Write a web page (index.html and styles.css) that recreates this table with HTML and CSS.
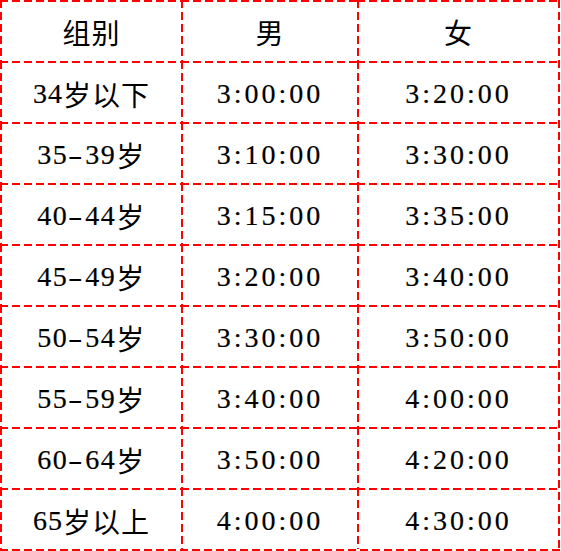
FILE: index.html
```html
<!DOCTYPE html>
<html lang="zh-CN">
<head>
<meta charset="utf-8">
<title>分组标准</title>
<link rel="stylesheet" href="styles.css">
</head>
<body>
<div class="table">
  <div class="cell head">组别</div><div class="cell head">男</div><div class="cell head">女</div>
  <div class="cell"><span class="d">34</span>岁以下</div><div class="cell num">3:00:00</div><div class="cell num">3:20:00</div>
  <div class="cell range"><span class="d">35</span><span class="dash">-</span><span class="d">39</span>岁</div><div class="cell num">3:10:00</div><div class="cell num">3:30:00</div>
  <div class="cell range"><span class="d">40</span><span class="dash">-</span><span class="d">44</span>岁</div><div class="cell num">3:15:00</div><div class="cell num">3:35:00</div>
  <div class="cell range"><span class="d">45</span><span class="dash">-</span><span class="d">49</span>岁</div><div class="cell num">3:20:00</div><div class="cell num">3:40:00</div>
  <div class="cell range"><span class="d">50</span><span class="dash">-</span><span class="d">54</span>岁</div><div class="cell num">3:30:00</div><div class="cell num">3:50:00</div>
  <div class="cell range"><span class="d">55</span><span class="dash">-</span><span class="d">59</span>岁</div><div class="cell num">3:40:00</div><div class="cell num">4:00:00</div>
  <div class="cell range"><span class="d">60</span><span class="dash">-</span><span class="d">64</span>岁</div><div class="cell num">3:50:00</div><div class="cell num">4:20:00</div>
  <div class="cell"><span class="d">65</span>岁以上</div><div class="cell num">4:00:00</div><div class="cell num">4:30:00</div>
</div>
</body>
</html>
```
FILE: styles.css
```css
html, body {
  margin: 0;
  padding: 0;
  background: #ffffff;
}

.table {
  display: grid;
  grid-template-columns: 181px 176px 201px;
  grid-auto-rows: 61px;
  width: 560px;
  padding: 0 2px 2px 0;
  box-sizing: border-box;
  background:
    repeating-linear-gradient(to bottom, #ff0000 0 8px, transparent 8px 12px) right top / 2px 100% no-repeat,
    repeating-linear-gradient(to right, #ff0000 0 8px, transparent 8px 12px) left bottom / 100% 2px no-repeat;
  font-family: "Liberation Serif", "Noto Sans CJK SC", serif;
  font-size: 28px;
  color: #000000;
}

.cell {
  display: flex;
  align-items: center;
  justify-content: center;
  padding: 4px 0 0 2px;
  letter-spacing: 1px;
  background:
    repeating-linear-gradient(to right, #ff0000 0 8px, transparent 8px 12px) left top / 100% 2px no-repeat,
    repeating-linear-gradient(to bottom, #ff0000 0 8px, transparent 8px 12px) left top / 2px 100% no-repeat;
}

.head {
  padding-top: 2px;
}

.d {
  -webkit-text-stroke: 0.2px #000;
}

.range {
  letter-spacing: 1.5px;
}

.dash {
  display: inline-block;
  transform: scaleX(1.6);
  margin: 0 3px;
}

.num {
  letter-spacing: 3px;
  -webkit-text-stroke: 0.2px #000;
}
```
